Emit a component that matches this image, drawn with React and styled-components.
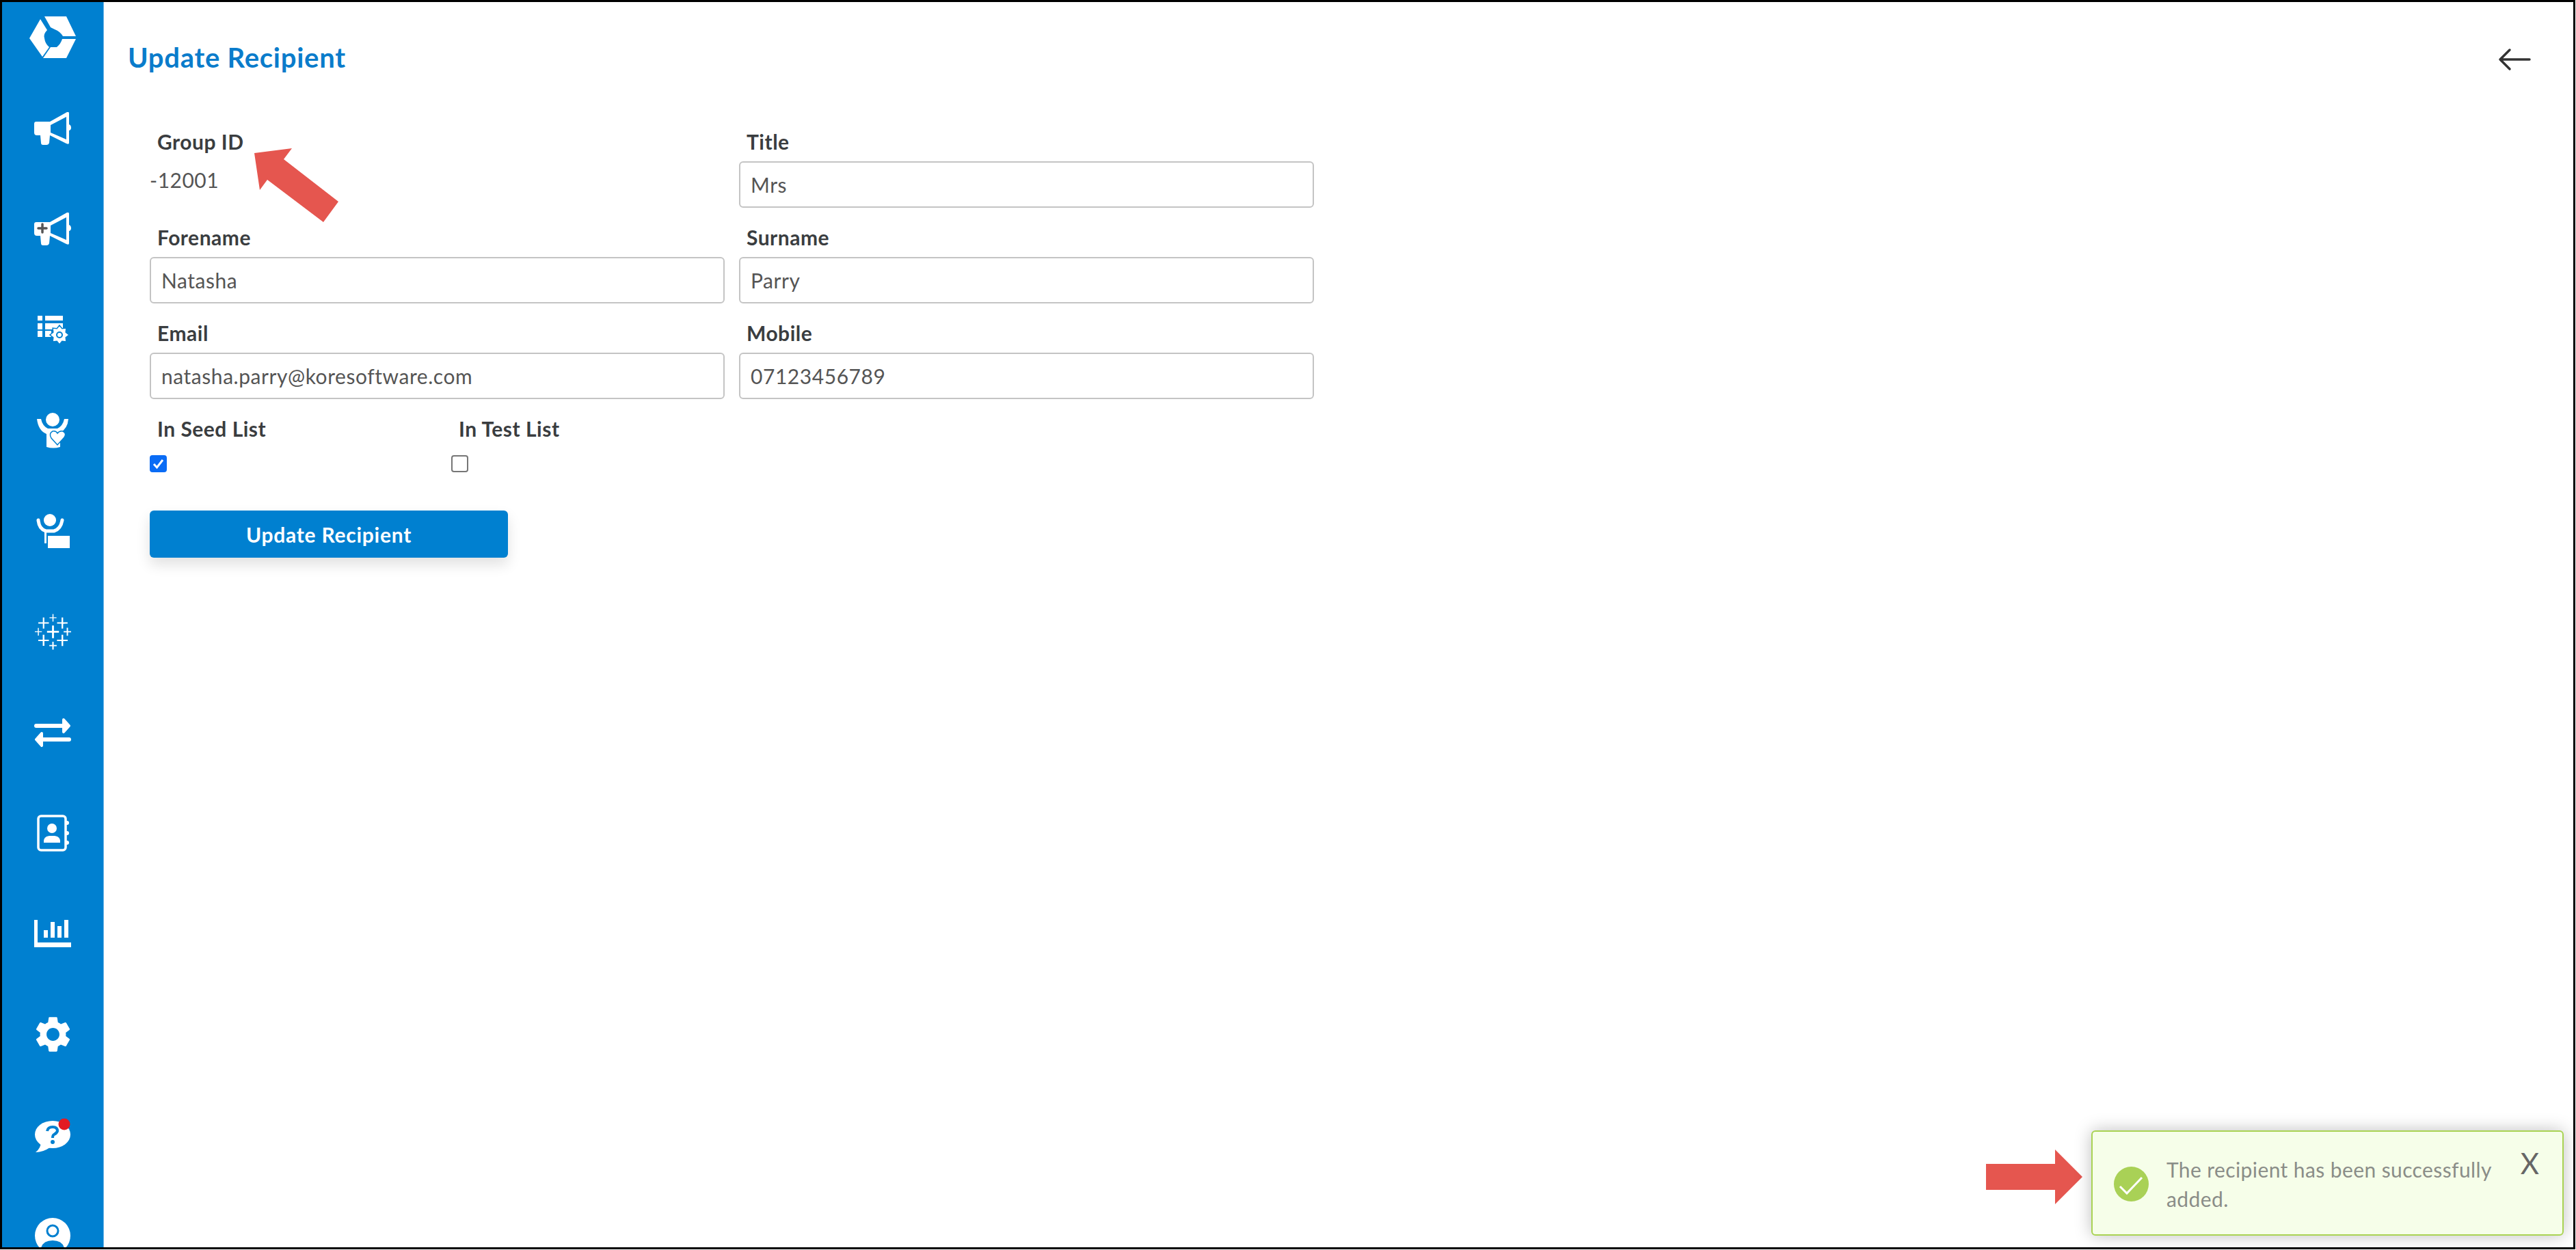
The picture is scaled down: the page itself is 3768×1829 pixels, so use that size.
import styled, { createGlobalStyle } from "styled-components";
import { SiTableau } from "react-icons/si";
import { MdSettings } from "react-icons/md";

const BLUE = "#0080d0";

const GlobalStyle = createGlobalStyle`
  * { box-sizing: border-box; }
  html, body { margin: 0; padding: 0; background: #fff; }
  body { font-family: "Lato", "Noto Sans", sans-serif; color: #343a40; }
`;

const Logo = () => (
  <svg width="68" height="61" viewBox="0 0 68 61" fill="#fff">
    <path d="M0 32 L16 4 L26 20 Q20 26 22 32 Q23 40 29 45 L19 59 Z" />
    <path d="M22 0 H54 L68 29 H49 Q45 22 37 19 L31 16 Z" />
    <path d="M68 33 L54 61 H20 L31 45 H40 Q46 40 48 33 Z" />
  </svg>
);

const Megaphone = ({ plus }) => (
  <svg width="54" height="48" viewBox="0 0 54 48">
    <path
      fill="#fff"
      fillRule="evenodd"
      d="M3 14 H23 L48 0 Q51 -1 51 2 V18 Q54 19 54 23 Q54 26 51 27 V45 Q51 48 47 46 L23 34 L22 45 Q21 48 18 48 H13 Q10 48 10 45 L9 34 H4 Q0 34 0 30 V17 Q0 14 3 14 Z M24 19 V30 L47 40 V7 Z"
    />
    {plus && (
      <path
        d="M6 23 H18 M12 17 V29"
        stroke="#555"
        strokeWidth="3.5"
        strokeLinecap="round"
      />
    )}
  </svg>
);

const gearPoints = (cx, cy, outer, inner, teeth) => {
  const points = [];
  for (let i = 0; i < teeth * 2; i++) {
    const r = i % 2 ? inner : outer;
    const a = (Math.PI * i) / teeth - Math.PI / 2;
    points.push(`${cx + r * Math.cos(a)},${cy + r * Math.sin(a)}`);
  }
  return points.join(" ");
};

const ListGear = () => (
  <svg width="47" height="42" viewBox="0 0 47 42" fill="#fff">
    <rect x="1" y="0" width="7" height="7" />
    <rect x="12" y="0" width="26" height="7" />
    <rect x="1" y="11" width="7" height="9" />
    <rect x="12" y="11" width="26" height="9" />
    <rect x="1" y="22" width="7" height="9" />
    <rect x="12" y="22" width="9" height="9" />
    <polygon
      points={gearPoints(33, 28, 14, 10, 8)}
      stroke={BLUE}
      strokeWidth="1.5"
    />
    <circle cx="33" cy="28" r="5" fill={BLUE} />
    <circle cx="33" cy="28" r="3" fill="#fff" />
  </svg>
);

const PersonHeart = () => (
  <svg width="46" height="52" viewBox="0 0 46 52" fill="#fff">
    <ellipse cx="23" cy="10" rx="10" ry="10" />
    <path d="M0 9 H6 Q8 19 16 23 H30 Q38 19 40 9 H46 Q45 23 34 29 V50 Q24 53 14 50 V31 Q2 26 0 9 Z" />
    <path
      d="M30 47 L21 37 Q17 30 23 27 Q28 26 30 30 Q33 26 38 27 Q44 30 40 36 Z"
      stroke={BLUE}
      strokeWidth="1.5"
    />
  </svg>
);

const PersonCard = () => (
  <svg width="49" height="50" viewBox="0 0 49 50" fill="#fff">
    <ellipse cx="20" cy="9" rx="9" ry="9" />
    <path
      d="M3 9 Q4 22 14 25 H26 Q36 22 38 9"
      fill="none"
      stroke="#fff"
      strokeWidth="5"
      strokeLinecap="round"
    />
    <rect x="12" y="25" width="3" height="18" />
    <rect x="17" y="32" width="32" height="18" />
  </svg>
);

const Arrows = () => (
  <svg width="54" height="43" viewBox="0 0 54 43" fill="#fff" stroke="#fff" strokeLinejoin="round" strokeLinecap="round">
    <path d="M3 12 H44" fill="none" strokeWidth="6" />
    <polygon points="43,3 51,12 43,21" strokeWidth="4" />
    <path d="M51 32 H10" fill="none" strokeWidth="6" />
    <polygon points="11,23 3,32 11,41" strokeWidth="4" />
  </svg>
);

const ContactBook = () => (
  <svg width="47" height="54" viewBox="0 0 47 54">
    <rect x="2" y="2" width="40" height="50" rx="4" fill="none" stroke="#fff" strokeWidth="3.5" />
    <circle cx="22" cy="20" r="7" fill="#fff" />
    <path d="M10 41 Q9 32 18 31 H26 Q35 32 34 41 Z" fill="#fff" />
    <circle cx="44" cy="12" r="3" fill="#fff" />
    <circle cx="44" cy="27" r="3" fill="#fff" />
    <circle cx="44" cy="41" r="3" fill="#fff" />
  </svg>
);

const ChartIcon = () => (
  <svg width="54" height="40" viewBox="0 0 54 40" fill="#fff">
    <path d="M0 0 H5 V33 H54 V40 H0 Z" />
    <rect x="14" y="15" width="6" height="11" />
    <rect x="24" y="3" width="6" height="23" />
    <rect x="34" y="9" width="6" height="17" />
    <rect x="44" y="0" width="6" height="26" />
  </svg>
);

const HelpBubble = () => (
  <svg width="52" height="50" viewBox="0 0 52 50">
    <ellipse cx="26" cy="24" rx="26" ry="20" fill="#fff" />
    <path d="M9 34 Q9 44 1 50 Q12 50 22 43 Z" fill="#fff" />
    <path
      d="M18 19 Q19 13 26 13 Q33 13 33 19 Q32 22 28 24 Q26 25 26 29"
      fill="none"
      stroke={BLUE}
      strokeWidth="4"
    />
    <circle cx="26" cy="35" r="3" fill={BLUE} />
    <circle cx="43" cy="9" r="8.5" fill="#e31b23" />
  </svg>
);

const ProfileIcon = () => (
  <svg width="52" height="52" viewBox="0 0 52 52">
    <circle cx="26" cy="26" r="26" fill="#fff" />
    <circle cx="26" cy="19" r="8" fill="none" stroke={BLUE} strokeWidth="3" />
    <path d="M9 44 Q12 33 26 33 Q40 33 43 44 Z" fill={BLUE} />
  </svg>
);

const navIcons = [
  <Logo key="logo" />,
  <Megaphone key="campaigns" />,
  <Megaphone key="new-campaign" plus />,
  <ListGear key="lists" />,
  <PersonHeart key="seed" />,
  <PersonCard key="test" />,
  <SiTableau key="tableau" size={53} color="#fff" />,
  <Arrows key="transfer" />,
  <ContactBook key="contacts" />,
  <ChartIcon key="reports" />,
  <MdSettings key="settings" size={63} color="#fff" />,
  <HelpBubble key="help" />,
  <ProfileIcon key="profile" />,
];

const App = () => {
  return (
    <Page>
      <GlobalStyle />
      <Sidebar>
        {navIcons.map((icon) => (
          <NavItem key={icon.key}>{icon}</NavItem>
        ))}
      </Sidebar>

      <Main>
        <Header>
          <Title>Update Recipient</Title>
          <BackButton>
            <svg width="48" height="34" viewBox="0 0 48 34" fill="none" stroke="#333" strokeWidth="3.5" strokeLinecap="round" strokeLinejoin="round">
              <path d="M3 17 H46 M17 3 L3 17 L17 31" />
            </svg>
          </BackButton>
        </Header>

        <Form>
          <Field>
            <Label>Group ID</Label>
            <StaticValue>-12001</StaticValue>
          </Field>
          <Field>
            <Label>Title</Label>
            <Input defaultValue="Mrs" />
          </Field>
          <Field>
            <Label>Forename</Label>
            <Input defaultValue="Natasha" />
          </Field>
          <Field>
            <Label>Surname</Label>
            <Input defaultValue="Parry" />
          </Field>
          <Field>
            <Label>Email</Label>
            <Input defaultValue="natasha.parry@koresoftware.com" />
          </Field>
          <Field>
            <Label>Mobile</Label>
            <Input defaultValue="07123456789" />
          </Field>
          <CheckRow>
            <Field>
              <Label>In Seed List</Label>
              <CheckBox $checked>
                <svg width="19" height="19" viewBox="0 0 19 19" fill="none" stroke="#fff" strokeWidth="3">
                  <path d="M3 10 L7.5 15 L16 4" />
                </svg>
              </CheckBox>
            </Field>
            <Field>
              <Label>In Test List</Label>
              <CheckBox />
            </Field>
          </CheckRow>
          <SubmitButton type="button">Update Recipient</SubmitButton>
        </Form>
      </Main>

      <Annotation width="130" height="112" viewBox="0 0 130 112" $left={368} $top={214}>
        <polygon points="4,10 59,3 47,19 127,81 105,111 23,49 12,64" fill="#e5564f" />
      </Annotation>
      <Annotation width="141" height="80" viewBox="0 0 141 80" $left={2905} $top={1682}>
        <polygon points="0,21 101,21 101,0 141,40 101,80 101,59 0,59" fill="#e5564f" />
      </Annotation>

      <Toast>
        <ToastIcon>
          <svg width="51" height="51" viewBox="0 0 51 51" fill="none" stroke="#fff" strokeWidth="3">
            <path d="M9 29 L19 39 L41 16" />
          </svg>
        </ToastIcon>
        <ToastMessage>The recipient has been successfully added.</ToastMessage>
        <ToastClose>X</ToastClose>
      </Toast>
    </Page>
  );
};

const Page = styled.div`
  position: relative;
  display: flex;
  width: 3767px;
  height: 1828px;
  border: 3px solid #000;
  overflow: hidden;
  background: #fff;
`;

const Sidebar = styled.nav`
  flex: 0 0 149px;
  display: flex;
  flex-direction: column;
  align-items: center;
  border-right: 1px solid #6db8e8;
  background: ${BLUE};
  overflow: hidden;
`;

const NavItem = styled.div`
  flex: 0 0 147.3px;
  display: flex;
  align-items: center;
  justify-content: center;
  &:first-child {
    flex-basis: 102px;
    margin-bottom: 9.4px;
  }
`;

const Main = styled.main`
  flex: 1;
  min-width: 0;
`;

const Header = styled.header`
  display: flex;
  align-items: center;
  justify-content: space-between;
  height: 168px;
  padding: 0 62px 0 35px;
`;

const Title = styled.h1`
  margin: 0 0 6px;
  font-size: 40px;
  font-weight: 700;
  letter-spacing: 0.75px;
  color: #0a7ccb;
`;

const BackButton = styled.div`
  display: flex;
`;

const Form = styled.form`
  display: grid;
  grid-template-columns: 841px 841px;
  column-gap: 21px;
  row-gap: 21px;
  margin: 14px 0 0 67px;
  width: 1703px;
`;

const Field = styled.div`
  display: flex;
  flex-direction: column;
`;

const Label = styled.label`
  display: block;
  height: 44px;
  margin-bottom: 7px;
  padding-left: 11px;
  font-size: 30px;
  font-weight: 700;
  line-height: 44px;
  letter-spacing: 0.5px;
  color: #3a3d40;
`;

const StaticValue = styled.span`
  margin-top: 5px;
  font-size: 30px;
  line-height: 44px;
  letter-spacing: 0.5px;
  color: #555;
`;

const Input = styled.input`
  width: 100%;
  height: 68px;
  padding: 0 15px;
  border: 2px solid #c4c4c4;
  border-radius: 6px;
  font: 400 30px "Lato", "Noto Sans", sans-serif;
  letter-spacing: 0.55px;
  color: #555;
  background: #fff;
`;

const CheckRow = styled.div`
  grid-column: 1 / 3;
  display: grid;
  grid-template-columns: 441px 441px;
`;

const CheckBox = styled.span`
  display: flex;
  align-items: center;
  justify-content: center;
  width: 25px;
  height: 25px;
  margin-top: 10px;
  border: 2px solid ${(props) => (props.$checked ? "#0a6cf5" : "#767676")};
  border-radius: 4px;
  background: ${(props) => (props.$checked ? "#0a6cf5" : "#fff")};
`;

const SubmitButton = styled.button`
  grid-column: 1 / 3;
  width: 524px;
  height: 69px;
  margin-top: 35px;
  border: 0;
  border-radius: 6px;
  font: 700 30px "Lato", "Noto Sans", sans-serif;
  letter-spacing: 0.75px;
  color: #fff;
  background: ${BLUE};
  box-shadow: 0 10px 20px rgba(0, 0, 0, 0.12);
`;

const Annotation = styled.svg`
  position: absolute;
  left: ${(props) => props.$left - 3}px;
  top: ${(props) => props.$top - 3}px;
`;

const Toast = styled.div`
  position: absolute;
  right: 14px;
  bottom: 17px;
  display: flex;
  align-items: flex-start;
  width: 691px;
  height: 154px;
  padding: 34px 34px 0 31px;
  border: 2px solid #a9d353;
  border-radius: 6px;
  background: #f6fee9;
  box-shadow: 0 0 24px rgba(0, 0, 0, 0.25);
`;

const ToastIcon = styled.div`
  flex: 0 0 51px;
  height: 51px;
  margin-top: 17px;
  display: flex;
  border-radius: 50%;
  background: #a9d156;
`;

const ToastMessage = styled.p`
  flex: 1;
  margin: 0 0 0 26px;
  font-size: 30px;
  line-height: 43px;
  letter-spacing: 0.4px;
  color: #8a8d88;
`;

const ToastClose = styled.span`
  margin-top: -9px;
  font-size: 42px;
  line-height: 42px;
  color: #666;
`;

export default App;
